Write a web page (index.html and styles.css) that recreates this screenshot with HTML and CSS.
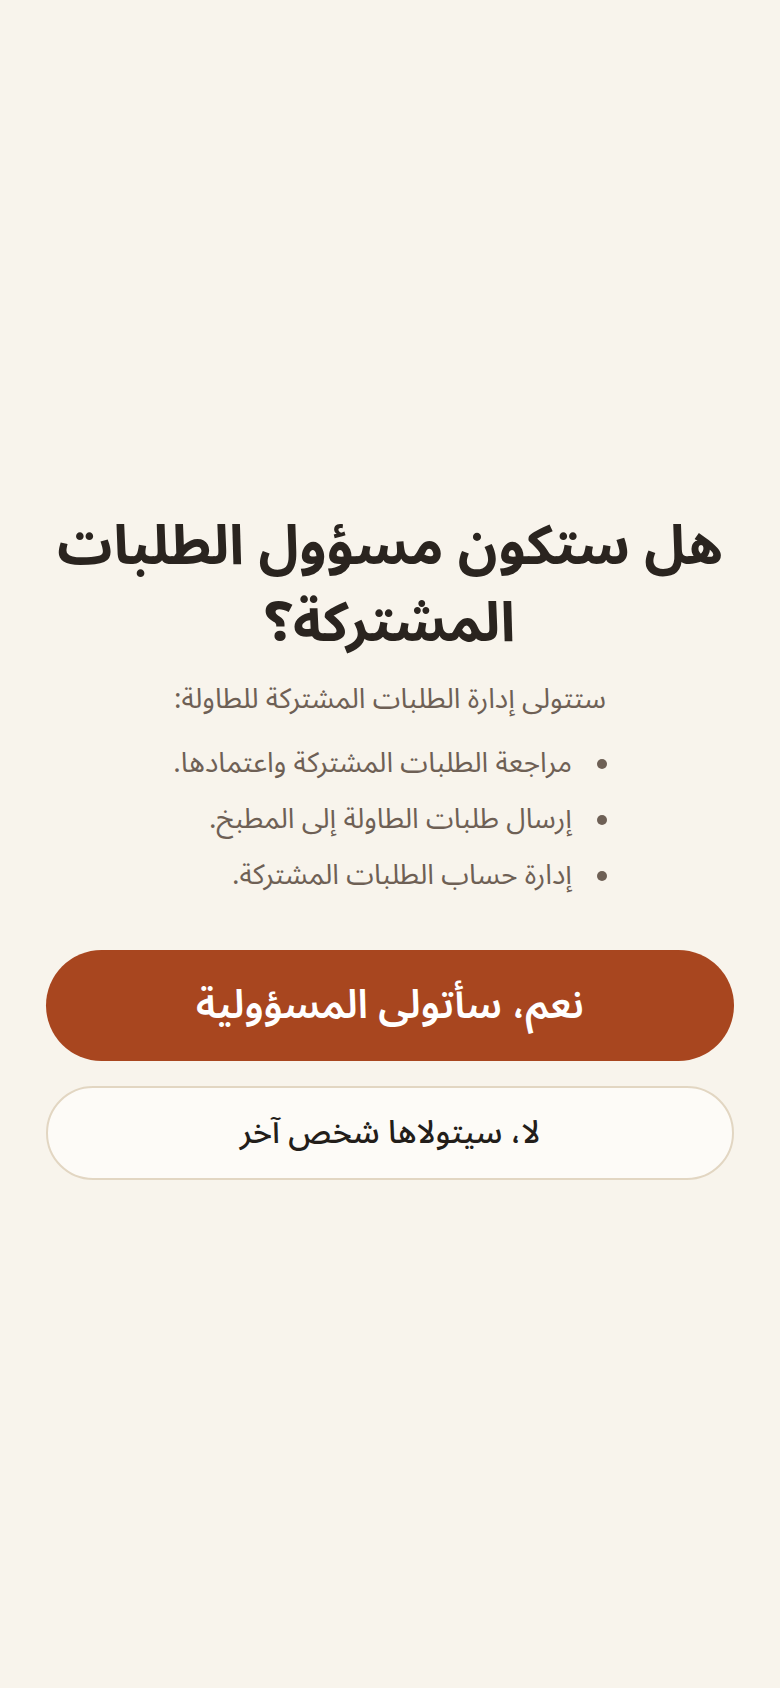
FILE: index.html
```html
<!DOCTYPE html>
<html lang="ar" dir="rtl">
<head>
<meta charset="utf-8">
<title>مسؤول الطلبات المشتركة</title>
<link rel="stylesheet" href="styles.css">
</head>
<body>
<main class="screen">
  <section class="card">
    <h1 class="title">هل ستكون مسؤول الطلبات المشتركة؟</h1>
    <p class="lead">ستتولى إدارة الطلبات المشتركة للطاولة:</p>
    <div class="list-wrap">
      <ul class="duties">
        <li>مراجعة الطلبات المشتركة واعتمادها.</li>
        <li>إرسال طلبات الطاولة إلى المطبخ.</li>
        <li>إدارة حساب الطلبات المشتركة.</li>
      </ul>
    </div>
    <div class="actions">
      <button class="btn btn-primary" type="button">نعم، سأتولى المسؤولية</button>
      <button class="btn btn-secondary" type="button">لا، سيتولاها شخص آخر</button>
    </div>
  </section>
</main>
</body>
</html>
```
FILE: styles.css
```css
* { box-sizing: border-box; }
html, body {
  margin: 0;
  padding: 0;
  background: #f8f4ec;
}
body {
  font-family: "Noto Sans Arabic", "Noto Sans", "DejaVu Sans", sans-serif;
  color: #2b2520;
}
.screen {
  min-height: 100vh;
  display: flex;
  flex-direction: column;
  justify-content: center;
  padding: 0 46px;
}
.card {
  display: flex;
  flex-direction: column;
  align-items: stretch;
}
.title {
  margin: 0;
  text-align: center;
  font-size: 55px;
  line-height: 77px;
  font-weight: 700;
  color: #2a241f;
}
.lead {
  margin: 18px 0 0;
  text-align: center;
  font-size: 28px;
  line-height: 1.4;
  color: #6e6055;
}
.list-wrap {
  display: flex;
  justify-content: center;
  margin-top: 17px;
}
.duties {
  margin: 0;
  padding: 0;
  list-style: none;
  font-size: 28px;
  line-height: 56px;
  color: #6e6055;
}
.duties li {
  display: flex;
  align-items: center;
  gap: 25px;
}
.duties li::before {
  content: "";
  flex: 0 0 10px;
  width: 10px;
  height: 10px;
  border-radius: 50%;
  background: #6e6055;
}
.actions {
  display: flex;
  flex-direction: column;
  gap: 25px;
  margin-top: 46px;
}
.btn {
  display: flex;
  align-items: center;
  justify-content: center;
  width: 100%;
  border-radius: 999px;
  font-family: inherit;
  cursor: pointer;
}
.btn-primary {
  height: 111px;
  background: #a8461f;
  border: none;
  color: #ffffff;
  font-size: 40px;
  font-weight: 600;
}
.btn-secondary {
  height: 94px;
  background: #fdfbf7;
  border: 2px solid #e2d6c2;
  color: #231e1a;
  font-size: 32px;
  font-weight: 500;
}
```
